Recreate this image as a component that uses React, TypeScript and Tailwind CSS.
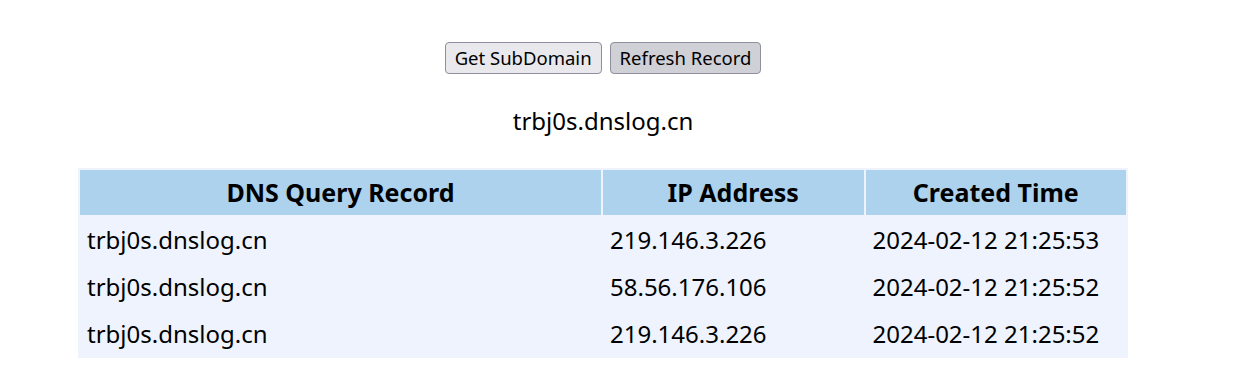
export default function App() {
  const rows = [
    ["trbj0s.dnslog.cn", "219.146.3.226", "2024-02-12 21:25:53"],
    ["trbj0s.dnslog.cn", "58.56.176.106", "2024-02-12 21:25:52"],
    ["trbj0s.dnslog.cn", "219.146.3.226", "2024-02-12 21:25:52"],
  ]

  return (
    <div className="w-[1206px] bg-white pt-[42px] text-center font-['Noto_Sans',sans-serif] text-black">
      <div className="flex justify-center gap-[8px]">
        <button className="h-[32px] rounded-[4px] border border-[#8f8f9d] bg-[#e9e9ed] px-[9px] text-[18.5px] leading-none">
          Get SubDomain
        </button>
        <button className="h-[32px] rounded-[4px] border border-[#8f8f9d] bg-[#d0d0d7] px-[9px] text-[18.5px] leading-none">
          Refresh Record
        </button>
      </div>

      <div className="mt-[32px] text-[24px] leading-[30px]">trbj0s.dnslog.cn</div>

      <table className="mx-auto mt-[32px] w-[1050px] border-separate border-spacing-[2px] bg-[#eef3fd] text-[24px]">
        <thead>
          <tr>
            <th className="h-[45px] w-1/2 bg-[#acd2ee] text-[25px] font-bold">DNS Query Record</th>
            <th className="h-[45px] w-1/4 bg-[#acd2ee] text-[25px] font-bold">IP Address</th>
            <th className="h-[45px] w-1/4 bg-[#acd2ee] text-[25px] font-bold">Created Time</th>
          </tr>
        </thead>
        <tbody>
          {rows.map((row, i) => (
            <tr key={i}>
              {row.map((cell, j) => (
                <td key={j} className="h-[45px] px-[7px] text-left">
                  {cell}
                </td>
              ))}
            </tr>
          ))}
        </tbody>
      </table>
    </div>
  )
}
